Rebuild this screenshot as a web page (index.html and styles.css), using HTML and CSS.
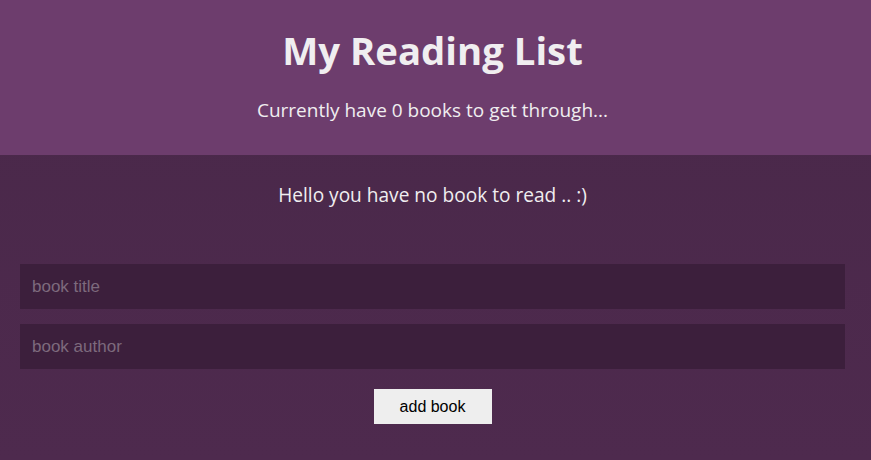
FILE: index.html
```html
<!DOCTYPE html>
<html>
<head>
<meta charset="utf-8">
<link rel="stylesheet" href="styles.css">
</head>
<body>
<div class="app">
  <header class="navbar">
    <h1 class="title">My Reading List</h1>
    <p class="subtitle">Currently have 0 books to get through...</p>
  </header>
  <main class="content">
    <div class="empty">Hello you have no book to read .. :)</div>
    <form class="book-form">
      <input class="field" type="text" placeholder="book title">
      <input class="field" type="text" placeholder="book author">
      <input class="submit" type="submit" value="add book">
    </form>
  </main>
</div>
</body>
</html>
```

FILE: styles.css
```css
html, body {
  margin: 0;
  padding: 0;
  height: 100%;
}
body {
  background: #4c2a4c;
  font-family: "Open Sans", "Noto Sans", sans-serif;
  color: #f0eef0;
}
.app {
  min-height: 100%;
  background: linear-gradient(#492849, #4e2a4e);
}
.navbar {
  box-sizing: border-box;
  height: 155px;
  padding: 24px 26px 0 20px;
  text-align: center;
  background: #6d3d6d;
}
.title {
  margin: 0;
  font-size: 38.3px;
  line-height: 52px;
  font-weight: 700;
}
.subtitle {
  margin: 22px 0 0;
  font-size: 19px;
  line-height: 24px;
}
.content {
  padding: 28px 6px 0 0;
}
.empty {
  text-align: center;
  font-size: 19.1px;
  line-height: 24px;
}
.book-form {
  display: flex;
  flex-direction: column;
  align-items: center;
  gap: 15px;
  padding: 57px 20px 0 20px;
}
.field {
  box-sizing: border-box;
  width: 100%;
  height: 45px;
  padding: 0 12px;
  border: 0;
  outline: none;
  background: #3c1f3c;
  color: #eee;
  font-family: "Liberation Sans", Arial, sans-serif;
  font-size: 17px;
}
.field::placeholder {
  color: #7d6a7d;
}
.submit {
  margin-top: 5px;
  width: 118px;
  height: 35px;
  border: 0;
  background: #eee;
  color: #000;
  font-family: "Liberation Sans", Arial, sans-serif;
  font-size: 16px;
}
```
